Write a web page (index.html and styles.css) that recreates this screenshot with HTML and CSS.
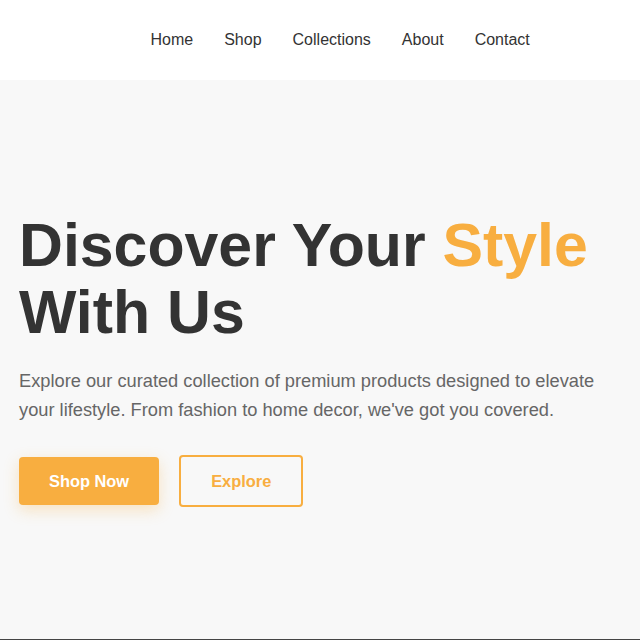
FILE: index.html
```html
<!DOCTYPE html>
<html lang="en">
<head>
<meta charset="utf-8">
<title>Discover Your Style</title>
<link rel="stylesheet" href="styles.css">
</head>
<body>
<header class="site-header">
  <nav class="nav">
    <a href="#" class="nav-link">Home</a>
    <a href="#" class="nav-link">Shop</a>
    <a href="#" class="nav-link">Collections</a>
    <a href="#" class="nav-link">About</a>
    <a href="#" class="nav-link">Contact</a>
  </nav>
</header>
<section class="hero">
  <div class="hero-content">
    <h1 class="hero-title">Discover Your <span class="accent">Style</span><br>With Us</h1>
    <p class="hero-text">Explore our curated collection of premium products designed to elevate your lifestyle. From fashion to home decor, we've got you covered.</p>
    <div class="hero-actions">
      <a href="#" class="btn btn-primary">Shop Now</a>
      <a href="#" class="btn btn-outline">Explore</a>
    </div>
  </div>
</section>
<footer class="site-footer"></footer>
</body>
</html>
```
FILE: styles.css
```css
* { box-sizing: border-box; }
html, body { margin: 0; padding: 0; }
body {
  font-family: "Liberation Sans", Arial, sans-serif;
  color: #333;
  background: #f8f8f8;
}
.site-header {
  height: 80px;
  background: #fff;
  display: flex;
  align-items: center;
  padding-left: 135px;
}
.nav { display: flex; }
.nav-link {
  color: #333;
  text-decoration: none;
  font-size: 16px;
  padding: 0 15.5px;
}
.hero {
  height: 559px;
  background: #f8f8f8;
  display: flex;
  align-items: center;
  padding: 0 19px;
}
.hero-content { max-width: 620px; }
.hero-title {
  margin: 0 0 20px;
  font-size: 60.8px;
  line-height: 1.1;
  font-weight: 700;
  color: #333;
}
.accent { color: #f8ae40; }
.hero-text {
  margin: 0 0 30px;
  font-size: 18.25px;
  line-height: 1.6;
  color: #666;
}
.hero-actions { display: flex; gap: 20px; align-items: center; }
.btn {
  display: inline-block;
  font-size: 16.4px;
  line-height: 18px;
  font-weight: 700;
  text-decoration: none;
  padding: 15px 30px;
  border-radius: 4px;
}
.btn-primary {
  background: #f8ae40;
  color: #fff;
  box-shadow: 0 5px 15px rgba(248, 174, 64, 0.3);
}
.btn-outline {
  color: #f8ae40;
  border: 2px solid #f8ae40;
}
.site-footer {
  height: 40px;
  background: #444;
}
```
